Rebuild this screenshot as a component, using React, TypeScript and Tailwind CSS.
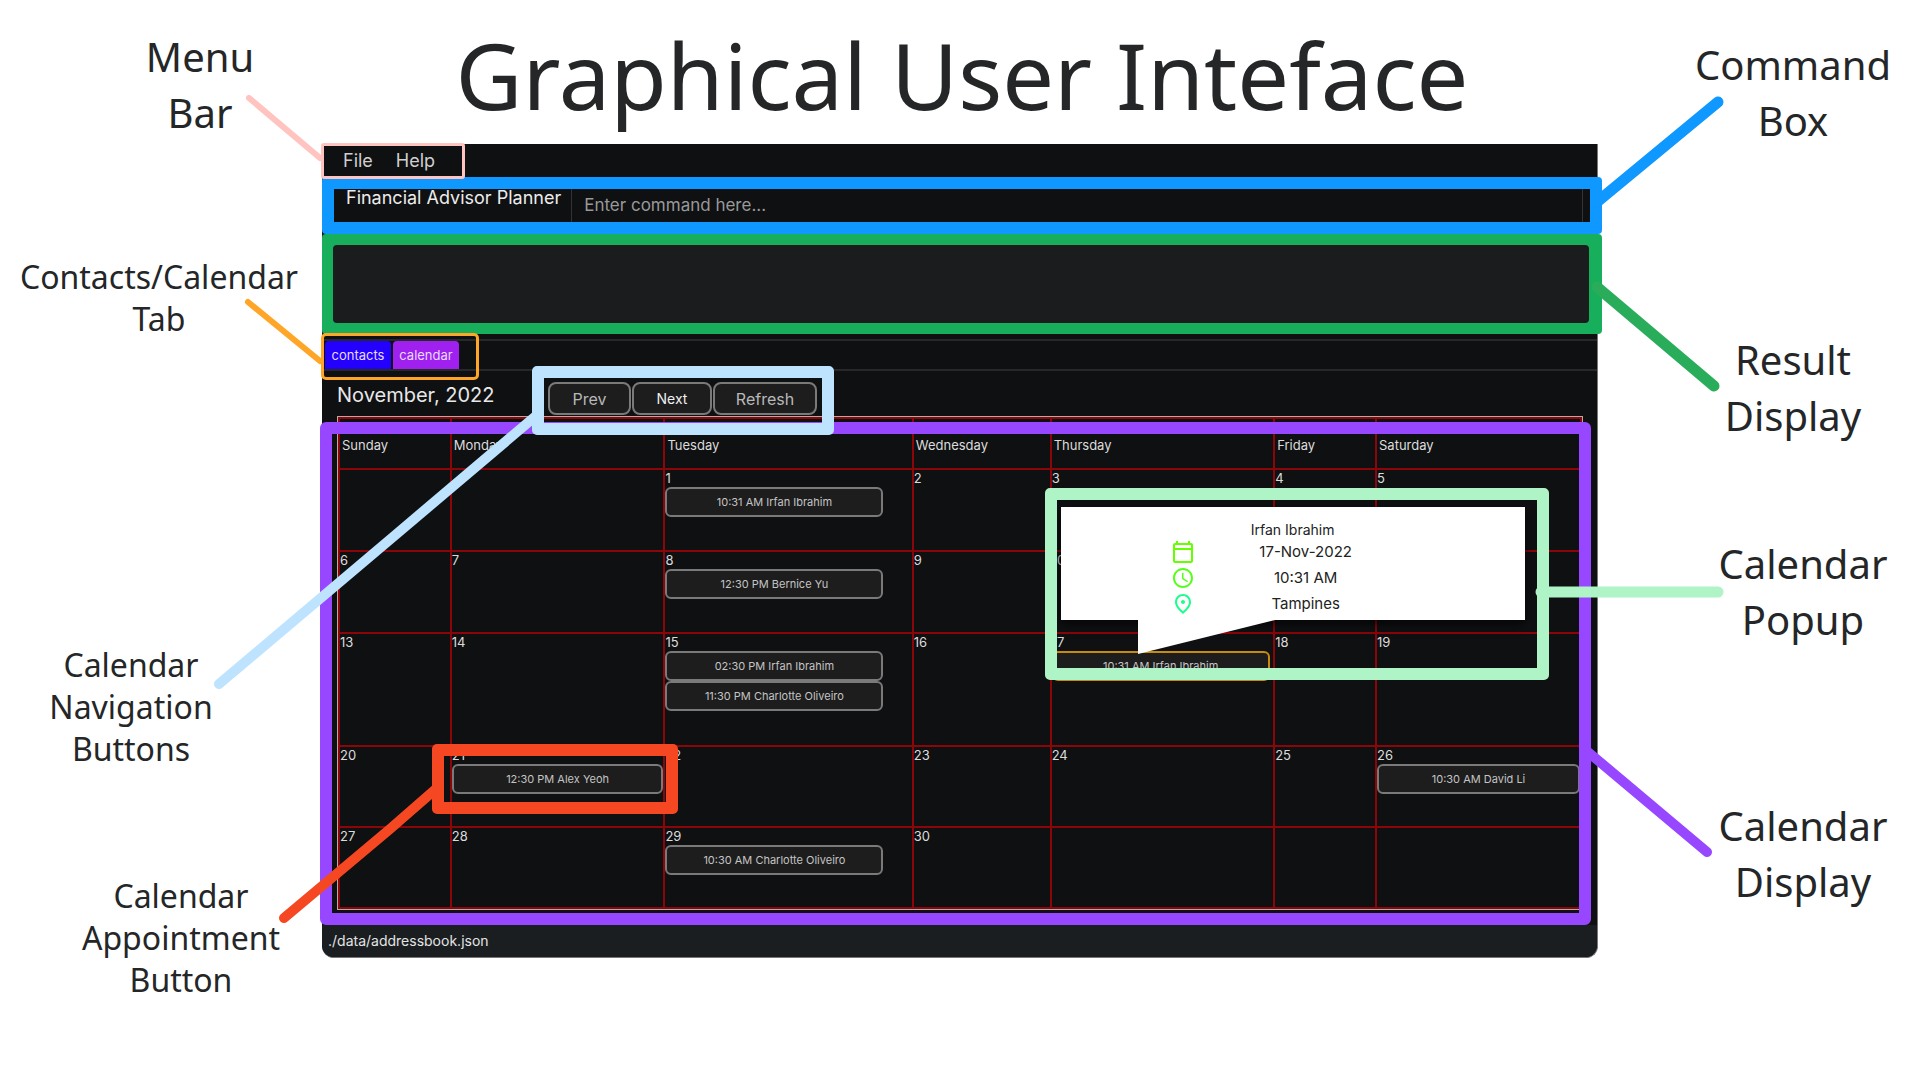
import React from "react";
import { MdOutlineCalendarToday, MdAccessTime, MdOutlinePlace } from "react-icons/md";

type Appointment = { label: string; kind?: "popup" | "framed" };
type Day = { date?: number; items?: Appointment[] };

const dayNames = ["Sunday", "Monday", "Tuesday", "Wednesday", "Thursday", "Friday", "Saturday"];
const columns = ["w-[9%]", "w-[17.2%]", "w-[20%]", "w-[11.1%]", "w-[18%]", "w-[8.2%]", "w-[16.5%]"];

const weeks: { height: string; days: Day[] }[] = [
  {
    height: "h-[82px]",
    days: [{}, {}, { date: 1, items: [{ label: "10:31 AM Irfan Ibrahim" }] }, { date: 2 }, { date: 3 }, { date: 4 }, { date: 5 }],
  },
  {
    height: "h-[82px]",
    days: [{ date: 6 }, { date: 7 }, { date: 8, items: [{ label: "12:30 PM Bernice Yu" }] }, { date: 9 }, { date: 10 }, { date: 11 }, { date: 12 }],
  },
  {
    height: "h-[113px]",
    days: [
      { date: 13 },
      { date: 14 },
      { date: 15, items: [{ label: "02:30 PM Irfan Ibrahim" }, { label: "11:30 PM Charlotte Oliveiro" }] },
      { date: 16 },
      { date: 17, items: [{ label: "10:31 AM Irfan Ibrahim", kind: "popup" }] },
      { date: 18 },
      { date: 19 },
    ],
  },
  {
    height: "h-[81px]",
    days: [
      { date: 20 },
      { date: 21, items: [{ label: "12:30 PM Alex Yeoh", kind: "framed" }] },
      { date: 22 },
      { date: 23 },
      { date: 24 },
      { date: 25 },
      { date: 26, items: [{ label: "10:30 AM David Li" }] },
    ],
  },
  {
    height: "h-[81px]",
    days: [{ date: 27 }, { date: 28 }, { date: 29, items: [{ label: "10:30 AM Charlotte Oliveiro" }] }, { date: 30 }, {}, {}, {}],
  },
];

function Popup() {
  return (
    <>
      <div className="absolute -top-[144px] left-[9px] z-20 h-[113px] w-[464px] bg-white pt-[14px] text-[15px] text-[#222] shadow-[0_4px_10px_rgba(0,0,0,0.7)]">
        <p className="h-[18px] text-center text-sm leading-[18px]">Irfan Ibrahim</p>
        <ul className="ml-[110px] w-[246px] text-center">
          <li className="flex h-[26px] items-center">
            <MdOutlineCalendarToday className="size-6 text-[#66ff00]" />
            <span className="flex-1">17-Nov-2022</span>
          </li>
          <li className="flex h-[26px] items-center">
            <MdAccessTime className="size-6 text-[#55ff1a]" />
            <span className="flex-1">10:31 AM</span>
          </li>
          <li className="flex h-[26px] items-center">
            <MdOutlinePlace className="size-6 text-[#1aff8c]" />
            <span className="flex-1">Tampines</span>
          </li>
        </ul>
        <svg className="absolute top-full left-[77px] h-[34px] w-[137px]" viewBox="0 0 137 34" aria-hidden="true">
          <path d="M0 0V34L137 0Z" fill="#fff" />
        </svg>
      </div>
      <div className="pointer-events-none absolute -top-[163px] -left-[7px] z-20 h-[192px] w-[504px] rounded-[5px] border-12 border-[#aff4c6]" />
    </>
  );
}

function AppointmentButton({ item }: { item: Appointment }) {
  return (
    <div className="relative w-full max-w-[218px]">
      <button
        className={
          item.kind === "popup"
            ? "block h-[30px] w-full rounded-md border-2 border-[#c98a10] bg-[#1d1d1d] text-[11px] text-[#c4c4c4]"
            : "block h-[30px] w-full rounded-md border-2 border-[#7a7a7a] bg-[#1d1d1d] text-[11px] text-[#c4c4c4]"
        }
      >
        {item.label}
      </button>
      {item.kind === "popup" && <Popup />}
      {item.kind === "framed" && (
        <div className="pointer-events-none absolute -top-5 -right-[15px] -left-5 z-20 h-[70px] rounded-[5px] border-12 border-[#f54721]" />
      )}
    </div>
  );
}

function Calendar() {
  return (
    <div className="relative pr-[14px] pb-[15px] pl-[15px]">
      <div className="border border-[#b8a8a8]">
        <table className="w-full table-fixed border-collapse text-[13px] text-[#dcdcdc]">
          <colgroup>
            {columns.map((c) => (
              <col key={c} className={c} />
            ))}
          </colgroup>
          <thead>
            <tr className="h-[51px]">
              {dayNames.map((d) => (
                <th key={d} scope="col" className="border-2 border-[#8b0509] pt-1 pl-[2px] text-left font-normal">
                  {d}
                </th>
              ))}
            </tr>
          </thead>
          <tbody>
            {weeks.map((w, i) => (
              <tr key={i} className={w.height}>
                {w.days.map((d, j) => (
                  <td key={j} className="border-2 border-[#8b0509] p-0 align-top">
                    <div className="h-[17px] leading-[17px]">{d.date}</div>
                    {d.items?.map((item) => (
                      <AppointmentButton key={item.label} item={item} />
                    ))}
                  </td>
                ))}
              </tr>
            ))}
          </tbody>
        </table>
      </div>
      <div className="pointer-events-none absolute top-[6px] right-[6px] bottom-0 -left-[2px] z-10 rounded-[6px] border-12 border-[#9747ff]" />
    </div>
  );
}

function PlannerWindow() {
  return (
    <main className="overflow-visible rounded-b-xl border-r border-b border-[#777] bg-[#0f1012] font-[Inter,sans-serif]">
      <nav className="relative flex h-[34px] items-center gap-[23px] pl-[21px] text-lg text-[#cfcfcf]">
        <button>File</button>
        <button>Help</button>
        <div className="pointer-events-none absolute -top-px -left-px z-20 h-9 w-36 rounded-[3px] border-3 border-[#ffc4c0]" />
      </nav>

      <section className="relative flex h-[56px] items-stretch pr-[14px] pl-6">
        <label htmlFor="command" className="pt-[6px] pr-[10px] text-lg text-[#ececec]">
          Financial Advisor Planner
        </label>
        <input
          id="command"
          placeholder="Enter command here..."
          className="min-w-0 flex-1 border-x border-[#333] pl-3 text-[17px] text-[#999] placeholder:text-[#999]"
        />
        <div className="pointer-events-none absolute -top-px -right-[5px] bottom-0 left-0 rounded-[4px] border-12 border-[#0f98ff]" />
      </section>

      <section className="relative h-[100px] bg-[#1b1c1e]" aria-label="Result display">
        <div className="absolute top-0 -right-[5px] bottom-0 left-0 rounded-[4px] bg-[#17ae5c] py-[11px] pr-[13px] pl-[11px]">
          <output className="block h-full rounded-[4px] bg-[#1b1c1e]" />
        </div>
      </section>

      <div className="relative pt-[5px]">
        <div role="tablist" className="flex h-8 gap-[2px] border-y-2 border-[#28282a] pl-[3px] text-[13px] text-[#e6dcff]">
          <button role="tab" className="w-[66px] rounded-t-[4px] bg-[#2400ff] pt-[2px]">
            contacts
          </button>
          <button role="tab" aria-selected="true" className="w-[66px] rounded-t-[4px] bg-[#a020f0] pt-[2px]">
            calendar
          </button>
        </div>
        <div className="pointer-events-none absolute -top-px -left-px z-20 h-[47px] w-[158px] rounded-[5px] border-3 border-[#ffa629]" />
      </div>

      <div className="flex h-[45px] items-start pl-[15px]">
        <h2 className="w-[211px] pt-[10px] text-xl text-[#e8e8e8]">November, 2022</h2>
        <div className="relative mt-[11px] flex h-[33px] gap-px text-[#b8b8b8]">
          <button className="w-[83px] rounded-lg border-2 border-[#7a7a7a] bg-[#1d1d1d]">Prev</button>
          <button className="w-[80px] rounded-lg border-2 border-[#7a7a7a] bg-[#1d1d1d] text-sm text-[#f0f0f0]">Next</button>
          <button className="w-[104px] rounded-lg border-2 border-[#7a7a7a] bg-[#1d1d1d]">Refresh</button>
          <div className="pointer-events-none absolute -top-4 -right-[17px] -left-4 z-20 h-[69px] rounded-[5px] border-12 border-[#bde3ff]" />
        </div>
      </div>

      <Calendar />

      <footer className="flex h-8 items-center rounded-b-xl bg-[#1a1e20] pl-[6px] text-sm text-[#e4e4e4]">./data/addressbook.json</footer>
    </main>
  );
}

export default function App() {
  return (
    <div className="relative grid min-h-screen grid-cols-[322px_1fr_322px] items-start overflow-hidden bg-white text-center font-['Noto_Sans',sans-serif] text-[#242628]">
      <aside className="pt-[29px] text-[32px] leading-[42px]">
        <p className="pl-[78px] text-[40px] leading-[56px]">Menu<br />Bar</p>
        <p className="mt-[115px] pr-1">Contacts/Calendar<br />Tab</p>
        <p className="mt-[304px] pr-[60px]">Calendar<br />Navigation<br />Buttons</p>
        <p className="mt-[105px] pl-10">Calendar<br />Appointment<br />Button</p>
      </aside>

      <div className="min-w-0">
        <h1 className="h-36 pt-3 pl-1 text-[92px] leading-[126px] whitespace-nowrap">Graphical User Inteface</h1>
        <div className="text-left">
          <PlannerWindow />
        </div>
      </div>

      <aside className="pt-[37px] text-[40px] leading-[56px]">
        <p className="pl-[68px]">Command<br />Box</p>
        <p className="mt-[183px] pl-[68px]">Result<br />Display</p>
        <p className="mt-[92px] pl-[88px]">Calendar<br />Popup</p>
        <p className="mt-[150px] pl-[88px]">Calendar<br />Display</p>
      </aside>

      <svg className="pointer-events-none absolute top-0 left-0 z-30 h-[1080px] w-[560px]" viewBox="0 0 560 1080" fill="none" strokeLinecap="round" strokeLinejoin="round" aria-hidden="true">
        <path d="M249 98L320 158" stroke="#ffc4c0" strokeWidth="6" />
        <path d="M248 302L320 361" stroke="#ffa629" strokeWidth="6" />
        <path d="M219 684L393 537L537 415" stroke="#bde3ff" strokeWidth="10" />
        <path d="M284 918L390 829L437 788" stroke="#f54721" strokeWidth="10" />
      </svg>
      <svg className="pointer-events-none absolute top-0 right-0 z-30 h-[1080px] w-[400px]" viewBox="1520 0 400 1080" fill="none" strokeLinecap="round" aria-hidden="true">
        <path d="M1718 102L1597 202" stroke="#0f98ff" strokeWidth="11" />
        <path d="M1597 287L1714 386" stroke="#2aad5b" strokeWidth="11" />
        <path d="M1541 592H1718" stroke="#aff4c6" strokeWidth="11" />
        <path d="M1588 752L1707 852" stroke="#9747ff" strokeWidth="10" />
      </svg>
    </div>
  );
}
